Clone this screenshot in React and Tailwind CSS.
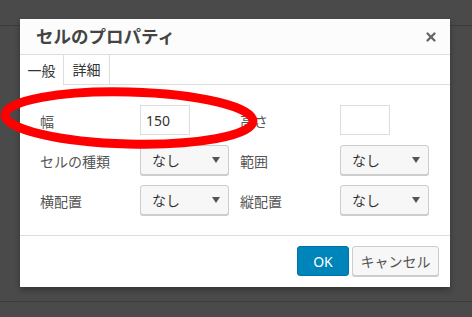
import { X } from 'lucide-react';

const FONT = { fontFamily: '"Noto Sans", "Noto Sans CJK JP", sans-serif' };

function TextBox({ value }) {
  return (
    <div className="w-[50px] h-[30px] border border-[#dddddd] bg-white flex items-center px-[5px] text-[14px] text-[#333]">
      {value}
    </div>
  );
}

function Select({ value }) {
  return (
    <div className="w-[89px] h-[30px] border border-[#cccccc] rounded-[3px] bg-[#f7f7f7] shadow-[0_1px_0_#cccccc] flex items-center justify-between pl-[11px] pr-[8px] text-[14px] text-[#333]">
      <span>{value}</span>
      <span className="w-0 h-0 border-l-[4px] border-r-[4px] border-t-[6px] border-l-transparent border-r-transparent border-t-[#555]" />
    </div>
  );
}

function Label({ children }) {
  return <div className="w-[100px] pt-[3px] text-[14px] text-[#555] flex items-center">{children}</div>;
}

export default function App() {
  const rows = [
    ['幅', <TextBox value="150" />, '高さ', <TextBox value="" />],
    ['セルの種類', <Select value="なし" />, '範囲', <Select value="なし" />],
    ['横配置', <Select value="なし" />, '縦配置', <Select value="なし" />],
  ];

  return (
    <div className="relative w-[472px] h-[317px] bg-[#4a4a4a] overflow-hidden" style={FONT}>
      <div className="absolute left-0 right-0 top-[25px] h-px bg-[#3c3c3c]" />
      <div className="absolute left-0 right-0 top-[301px] h-px bg-[#3c3c3c]" />

      <div className="absolute left-[20px] top-[19px] w-[430px] h-[268px] bg-white shadow-[0_3px_6px_rgba(0,0,0,0.3)] flex flex-col">
        <div className="h-[36px] shrink-0 border-b border-[#dddddd] bg-[#fcfcfc] flex items-center justify-between pl-[16px] pr-[12px]">
          <span className="text-[17.5px] font-bold text-[#444]">セルのプロパティ</span>
          <X size={14} strokeWidth={4} className="text-[#666]" />
        </div>

        <div className="h-[30px] shrink-0 flex">
          <div className="w-[44px] border-r border-[#dddddd] flex items-center justify-center text-[14px] text-[#333]">
            一般
          </div>
          <div className="w-[46px] border-r border-b border-[#dddddd] flex items-center justify-center text-[14px] text-[#333]">
            詳細
          </div>
          <div className="flex-1 border-b border-[#dddddd]" />
        </div>

        <div className="flex flex-col gap-[10px] pt-[20px] pb-[20px] pl-[20px] border-b border-[#dddddd]">
          {rows.map((r, i) => (
            <div key={i} className="flex h-[30px]">
              <Label>{r[0]}</Label>
              <div className="w-[100px]">{r[1]}</div>
              <Label>{r[2]}</Label>
              <div className="w-[100px]">{r[3]}</div>
            </div>
          ))}
        </div>

        <div className="flex-1 flex items-start justify-end gap-[3px] pt-[10px] pr-[11px]">
          <div className="w-[52px] h-[30px] rounded-[3px] bg-[#0085ba] border border-[#0073aa] flex items-center justify-center text-[14px] text-white">
            OK
          </div>
          <div className="w-[87px] h-[30px] rounded-[3px] bg-[#f7f7f7] border border-[#cccccc] shadow-[0_1px_0_#cccccc] flex items-center justify-center text-[14px] text-[#555]">
            キャンセル
          </div>
        </div>
      </div>

      <svg className="absolute left-0 top-0" width="472" height="317">
        <ellipse cx="129" cy="118" rx="124" ry="26" fill="none" stroke="#ff0000" strokeWidth="9" transform="rotate(1.5 129 118)" />
      </svg>
    </div>
  );
}
